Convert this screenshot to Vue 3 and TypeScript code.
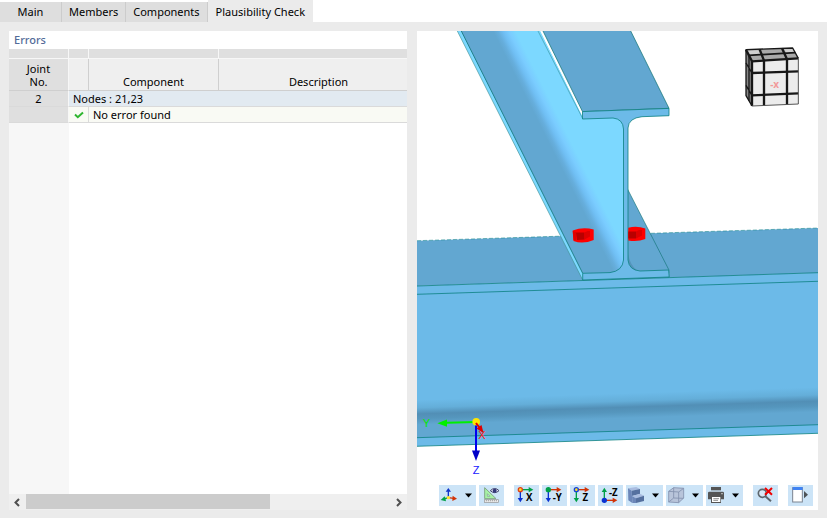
<script setup lang="ts">
import { ref } from 'vue'

interface Tab {
  id: string
  label: string
}

interface ResultRow {
  component: string
}

interface JointGroup {
  joint: number
  nodes: string
  rows: ResultRow[]
}

interface AxisTool {
  label: string
  text: string
  right: string
  vertical: string
  up: boolean
  dot: string
  ring: string
}

const tabs: Tab[] = [
  { id: 'main', label: 'Main' },
  { id: 'members', label: 'Members' },
  { id: 'components', label: 'Components' },
  { id: 'check', label: 'Plausibility Check' },
]
const activeTab = ref('check')

const groups: JointGroup[] = [
  { joint: 2, nodes: 'Nodes : 21,23', rows: [{ component: 'No error found' }] },
]

const green = '#00a048'
const red = '#d23205'
const blue = '#0a32d2'

const axisTools: AxisTool[] = [
  { label: 'View in X', text: 'X', right: green, vertical: blue, up: false, dot: '#ffe02e', ring: '#e23c14' },
  { label: 'View in -Y', text: '-Y', right: red, vertical: blue, up: false, dot: green, ring: green },
  { label: 'View in Z', text: 'Z', right: red, vertical: green, up: false, dot: '#ffe02e', ring: '#1440d8' },
  { label: 'View in -Z', text: '-Z', right: red, vertical: green, up: true, dot: blue, ring: blue },
]
</script>

<template>
  <div class="dialog">
    <nav class="tabs" role="tablist">
      <button
        v-for="tab in tabs"
        :key="tab.id"
        type="button"
        role="tab"
        class="tab"
        :class="{ active: tab.id === activeTab }"
        :aria-selected="tab.id === activeTab"
        @click="activeTab = tab.id"
      >{{ tab.label }}</button>
    </nav>

    <main class="content">
      <section class="panel errors">
        <h2 class="title">Errors</h2>
        <div class="grid-area">
          <table class="grid">
            <colgroup>
              <col class="c-joint" />
              <col class="c-state" />
              <col class="c-component" />
              <col class="c-description" />
            </colgroup>
            <thead>
              <tr class="strip">
                <td></td>
                <td></td>
                <td></td>
                <td></td>
              </tr>
              <tr class="head">
                <th class="row-head">Joint<br />No.</th>
                <th></th>
                <th>Component</th>
                <th>Description</th>
              </tr>
            </thead>
            <tbody v-for="group in groups" :key="group.joint">
              <tr class="group">
                <th class="row-head">{{ group.joint }}</th>
                <td colspan="3">{{ group.nodes }}</td>
              </tr>
              <tr v-for="row in group.rows" :key="row.component" class="result">
                <th class="row-head"></th>
                <td class="state">
                  <svg width="10" height="8" viewBox="0 0 10 8" aria-hidden="true">
                    <path d="M1 3.6 L3.8 6.2 L9 1.4" fill="none" stroke="#2fb52f" stroke-width="2" />
                  </svg>
                </td>
                <td colspan="2">{{ row.component }}</td>
              </tr>
            </tbody>
          </table>
        </div>
        <div class="scrollbar">
          <button type="button" class="arrow" aria-label="Scroll left">
            <svg width="8" height="9" viewBox="0 0 8 9"><path d="M5 1 L1.5 4.5 L5 8" fill="none" stroke="#505050" stroke-width="2" /></svg>
          </button>
          <div class="track"><div class="thumb"></div></div>
          <button type="button" class="arrow" aria-label="Scroll right">
            <svg width="8" height="9" viewBox="0 0 8 9"><path d="M2 1 L5.5 4.5 L2 8" fill="none" stroke="#505050" stroke-width="2" /></svg>
          </button>
        </div>
      </section>

      <section class="panel view">
        <svg class="scene" viewBox="417 31 401 479" preserveAspectRatio="xMidYMid slice" aria-hidden="true">
          <defs>
            <linearGradient id="fillet" gradientUnits="userSpaceOnUse" x1="417" y1="400" x2="418" y2="431">
              <stop offset="0" stop-color="#6cbae8" />
              <stop offset="0.25" stop-color="#64aed9" />
              <stop offset="0.45" stop-color="#528fb6" />
              <stop offset="0.6" stop-color="#5596bd" />
              <stop offset="0.8" stop-color="#62a7d1" />
            </linearGradient>
            <linearGradient id="bend" gradientUnits="userSpaceOnUse" x1="493" y1="31" x2="511" y2="22">
              <stop offset="0" stop-color="#62a7d1" />
              <stop offset="0.2" stop-color="#66aedc" />
              <stop offset="0.45" stop-color="#70bff4" />
              <stop offset="0.7" stop-color="#7accff" />
              <stop offset="1" stop-color="#7cd8ff" />
            </linearGradient>
          </defs>

          <!-- supporting beam -->
          <path d="M417 240.7 L818 228 V273 L417 286 Z" fill="#62a7d1" />
          <path d="M417 286 L818 272.7 V433.3 L417 446.3 Z" fill="#6cbae8" />
          <path d="M417 400 L818 387 V424.7 L417 437.7 Z" fill="url(#fillet)" />
          <g fill="none" stroke="#0b8080" stroke-width="0.8">
            <path d="M417 286 L818 272.7" />
            <path d="M417 294.3 L818 281.3" />
            <path d="M417 437.7 L818 424.7" />
            <path d="M417 446.3 L818 433.3" />
            <path d="M417 240.7 L818 228" stroke-dasharray="4 2" stroke-width="0.5" />
          </g>

          <!-- inclined beam, far flange half -->
          <path d="M627 188 L668.7 269.5 V273 H627 Z" fill="#62a7d1" stroke="#0b7070" stroke-width="0.6" />
          <path d="M628 252 Q629 264 637 270.5 L629 270 Z" fill="#4d87ab" opacity="0.6" />

          <!-- inclined beam, near flange and web -->
          <path d="M457.3 31 H540 L583 118 H624 V274 L582.7 280 Z" fill="#7cd8ff" />
          <path d="M461.3 31 H540 L583 118 H624 V268 L615 273 H582.7 Z" fill="url(#bend)" />
          <path d="M457.3 31 L582.7 280" fill="none" stroke="#3c8c8c" stroke-width="0.6" />
          <path d="M461.3 31 L582.7 273.3" fill="none" stroke="#0b7070" stroke-width="0.8" />
          <path d="M538 31 L582.7 118.7" fill="none" stroke="#3f9dac" stroke-width="0.7" />

          <!-- upper flange -->
          <path d="M542.5 30 H630.2 L669 108.3 L582.5 111.6 Z" fill="#62a7d1" stroke="#0b7070" stroke-width="0.7" />

          <!-- section face -->
          <path
            d="M582.5 111.6 L669 108.4 V115.7 L642 116.7 Q628.5 118 628 128 V260 Q629 270 640 271 L668.7 270 L669.2 277 L582.7 280 V273.3 L610 272.6 Q622.5 271 623.5 260 V129 Q623 119 613 118 L582.5 119 Z"
            fill="#6cbae8" stroke="#0b8080" stroke-width="0.8"
          />

          <!-- bolts -->
          <g>
            <path d="M572.7 230.5 Q583 226.5 593.7 229.5 V240 Q583 244.5 573.5 241 Z" fill="#ff0000" />
            <path d="M572.7 231 L576 232 V240.5 L573.5 240 Z" fill="#e20000" />
            <path d="M576 232.5 H584.5 V239.5 L577 240 Z" fill="#b80000" />
            <path d="M584.5 232.5 L587.5 231 H590 V236.5 L584.5 239.5 Z" fill="#df0000" />
            <path d="M628.3 227.7 Q637 225.5 645.3 228.5 V239 Q638 242 628.3 240.5 Z" fill="#ff0000" />
            <path d="M628.3 231.5 H636 V238.5 H628.3 Z" fill="#b80000" />
            <path d="M636 231.5 L639 230 H642 V235.5 L636 238.5 Z" fill="#df0000" />
          </g>

          <!-- coordinate axes -->
          <path d="M476 422 L447 422.8" stroke="#00f000" stroke-width="2" />
          <path d="M437.3 423.2 L447 419.4 V426.8 Z" fill="#00f000" />
          <path d="M476 423 V451" stroke="#0000f0" stroke-width="2" />
          <path d="M472 450.5 H480 L476 461 Z" fill="#0000c8" />
          <circle cx="476.2" cy="421.7" r="3.8" fill="#ffe600" />
          <path d="M476 423 L480.5 429" stroke="#e00000" stroke-width="2" />
          <path d="M476.5 428.5 L481.5 425 L483.5 433 Z" fill="#e00000" />
          <text class="axis" x="426.5" y="427" fill="#00e800">Y</text>
          <text class="axis" x="482" y="439" fill="#ff2020">X</text>
          <text class="axis" x="476" y="474" fill="#2020ff">Z</text>
        </svg>

        <button type="button" class="cube" aria-label="Navigation cube">
          <svg width="56" height="62" viewBox="0 0 168 186">
            <path d="M6 11 L146 6 L163 37 L24 46 Z" fill="#a9a9a9" />
            <path d="M12 15 L43 13 L50 25 L19 28 Z M121 10 L146 9 L153 18 L127 21 Z" fill="#cfcfcf" />
            <path d="M6 11 L24 46 V180 L6 149 Z" fill="#878787" />
            <path d="M24 46 L163 37 V174 L24 180 Z" fill="#ececec" />
            <g fill="none" stroke="#171717" stroke-width="7" stroke-linejoin="round">
              <path d="M47 10 L60 44 V179" />
              <path d="M114 7 L129 40 V176" />
              <path d="M14 28 L154 20" stroke-width="5" />
              <path d="M24 81 L163 76 M24 148 L163 142" />
              <path d="M24 81 L6 51 M24 148 L6 118 M15 29 V164" stroke-width="4" />
              <path d="M24 46 V180" />
              <path d="M6 11 L24 46 L163 37" stroke-width="7" />
              <path d="M24 180 L6 149 V11 L146 6 L163 37" stroke-width="4" />
              <path d="M163 37 V174 L24 180" stroke-width="3" stroke="#555" />
            </g>
            <text x="92" y="125" class="cube-face">-x</text>
          </svg>
        </button>

        <div class="toolbar" role="toolbar">
          <div class="tool-group">
            <button type="button" class="tool" aria-label="Axes">
              <svg width="25" height="21" viewBox="0 0 75 63">
                <path d="M28 38 V17" stroke="#1034c8" stroke-width="4" />
                <path d="M20 20 L28 9 L36 20 Z" fill="#1034c8" />
                <path d="M28 38 L44 40" stroke="#d23205" stroke-width="4" />
                <path d="M41 32 L54 41 L40 48 Z" fill="#d23205" />
                <path d="M28 38 L15 42" stroke="#00a048" stroke-width="4" />
                <path d="M17 34 L5 45 L21 49 Z" fill="#00a048" />
                <circle cx="28" cy="38" r="5" fill="#ffe22c" />
              </svg>
              <svg class="caret" width="12" height="21" viewBox="0 0 12 21"><path d="M1 8.5 H8 L4.5 12.5 Z" /></svg>
            </button>
            <button type="button" class="tool" aria-label="Display options">
              <svg width="25" height="21" viewBox="0 0 75 63">
                <path d="M17 8 V41 H51 Z" fill="#a7f2a5" stroke="#83a688" stroke-width="3" />
                <path d="M25 26 V34 H33 Z" fill="#cce4f7" stroke="#83a688" stroke-width="2" />
                <rect x="16" y="44" width="42" height="8" fill="#eee" stroke="#929292" stroke-width="2" />
                <path d="M22 45 V49 M28 45 V49 M34 45 V49 M40 45 V49 M46 45 V49 M52 45 V49" stroke="#777" stroke-width="2" />
                <path d="M34 17 Q47 4 60 17 Q47 29 34 17 Z" fill="#e9ecfa" stroke="#41436d" stroke-width="3" />
                <circle cx="47" cy="17" r="6" fill="#343779" />
              </svg>
            </button>
          </div>

          <div class="tool-group">
            <button v-for="tool in axisTools" :key="tool.text" type="button" class="tool" :aria-label="tool.label">
              <svg width="25" height="21" viewBox="0 0 75 63">
                <g v-if="tool.up">
                  <path d="M19 46 V18" :stroke="tool.vertical" stroke-width="4" />
                  <path d="M11 21 L19 8 L27 21 Z" :fill="tool.vertical" />
                  <path d="M19 46 H48" :stroke="tool.right" stroke-width="4" />
                  <path d="M44 38 L58 46 L44 54 Z" :fill="tool.right" />
                  <circle cx="19" cy="46" r="6" :fill="tool.dot" :stroke="tool.ring" stroke-width="4" />
                </g>
                <g v-else>
                  <path d="M19 14 V42" :stroke="tool.vertical" stroke-width="4" />
                  <path d="M11 39 L19 52 L27 39 Z" :fill="tool.vertical" />
                  <path d="M19 14 H48" :stroke="tool.right" stroke-width="4" />
                  <path d="M44 6 L58 14 L44 22 Z" :fill="tool.right" />
                  <circle cx="19" cy="14" r="6" :fill="tool.dot" :stroke="tool.ring" stroke-width="4" />
                </g>
                <text class="axis-name" x="46" :y="tool.up ? 33 : 49">{{ tool.text }}</text>
              </svg>
            </button>
            <button type="button" class="tool" aria-label="Rendering">
              <svg width="25" height="21" viewBox="0 0 75 63">
                <path d="M6 10 L31 6 L42 12 L17 17 Z" fill="#a9bce0" />
                <path d="M6 10 L17 17 L19 54 L7 46 Z" fill="#6c86b8" />
                <path d="M17 17 L42 12 V27 L18 33 Z" fill="#55709f" />
                <path d="M18 33 L42 26 L54 32 L30 40 Z" fill="#a9bce0" />
                <path d="M18 33 L30 40 V54 H19 Z" fill="#6c86b8" />
                <path d="M30 40 L54 32 V48 L30 54 Z" fill="#55709f" />
              </svg>
              <svg class="caret" width="12" height="21" viewBox="0 0 12 21"><path d="M1 8.5 H8 L4.5 12.5 Z" /></svg>
            </button>
            <button type="button" class="tool" aria-label="Box view">
              <svg width="25" height="21" viewBox="0 0 75 63">
                <path d="M8 19 L23 8 H53 V39 L38 53 L8 51 Z" fill="#b8c4da" />
                <path d="M8 19 L38 21 V53 L8 51 Z M8 19 L23 8 L53 10 L38 21 M53 10 V39 L38 53 M23 8 V39 L8 51 M23 39 L53 40" fill="none" stroke="#8290ad" stroke-width="2.5" />
              </svg>
              <svg class="caret" width="12" height="21" viewBox="0 0 12 21"><path d="M1 8.5 H8 L4.5 12.5 Z" /></svg>
            </button>
            <button type="button" class="tool" aria-label="Print">
              <svg width="25" height="21" viewBox="0 0 75 63">
                <path d="M15 6 H45 V16 H15 Z" fill="#555" />
                <path d="M6 24 Q6 20 10 20 H50 Q54 20 54 24 V43 H6 Z" fill="#555" />
                <rect x="15" y="34" width="30" height="20" fill="#555" />
                <rect x="18" y="36" width="25" height="15" fill="#fff" />
                <path d="M22 41 H39 M22 46 H36" stroke="#555" stroke-width="2" />
                <circle cx="48" cy="26" r="2" fill="#fff" />
              </svg>
              <svg class="caret" width="12" height="21" viewBox="0 0 12 21"><path d="M1 8.5 H8 L4.5 12.5 Z" /></svg>
            </button>
          </div>

          <div class="tool-group spaced">
            <button type="button" class="tool" aria-label="Cancel zoom">
              <svg width="25" height="21" viewBox="0 0 75 63">
                <circle cx="28" cy="25" r="12" fill="#d9e9f7" stroke="#5d666d" stroke-width="5" />
                <path d="M37 34 L54 49" stroke="#5d666d" stroke-width="6" />
                <path d="M36 9 L57 29 M57 9 L36 29" stroke="#ef0000" stroke-width="6" />
              </svg>
            </button>
            <button type="button" class="tool" aria-label="Toggle panel">
              <svg width="25" height="21" viewBox="0 0 75 63">
                <rect x="14" y="8" width="29" height="43" fill="#fff" stroke="#7b8491" stroke-width="3" />
                <rect x="14" y="6" width="30" height="9" fill="#3f82f3" />
                <path d="M48 18 L60 29 L48 40 Z" fill="#4e5357" />
              </svg>
            </button>
          </div>
        </div>
      </section>
    </main>
  </div>
</template>

<style>
body {
  margin: 0;
}
</style>

<style scoped>
.dialog {
  display: flex;
  flex-direction: column;
  min-height: 100vh;
  background: #ebebeb;
  color: #000;
  font-family: "Noto Sans", "Open Sans", sans-serif;
  font-size: 11px;
}

.dialog button {
  margin: 0;
  border: 0;
  padding: 0;
  font: inherit;
  color: inherit;
}

.tabs {
  display: flex;
  align-items: flex-end;
  height: 22px;
  background: #fff;
}

.dialog .tab {
  min-width: 62px;
  height: 20px;
  padding: 0 7px;
  border-right: 1px solid #ccc;
  background: #dedede;
  line-height: 20px;
  white-space: nowrap;
}

.dialog .tab.active {
  height: 22px;
  padding: 2px 8px 0;
  border-right: 0;
  background: #ebebeb;
}

.content {
  flex: 1;
  display: grid;
  grid-template-columns: minmax(0, 398fr) minmax(0, 401fr);
  gap: 10px;
  padding: 9px 9px 8px;
}

.panel {
  background: #fff;
}

.errors {
  display: flex;
  flex-direction: column;
}

.title {
  margin: 0;
  padding-left: 5px;
  color: #536b99;
  font-size: 11px;
  font-weight: 500;
  line-height: 18px;
}

.grid-area {
  flex: 1;
  overflow: hidden;
  background: linear-gradient(to right, #f7f7f7 60px, #fff 60px);
}

.grid {
  width: calc(100% + 12px);
  border-collapse: separate;
  border-spacing: 0;
  table-layout: fixed;
}

.c-joint {
  width: 60px;
}

.c-state {
  width: 20px;
}

.c-component {
  width: 130px;
}

.grid th,
.grid td {
  box-sizing: border-box;
  padding: 0;
  font-weight: 400;
}

.strip td {
  height: 10px;
  border-right: 1px solid #f7f7f7;
  border-bottom: 1px solid #f7f7f7;
  background: #dfdfdf;
}

.grid .head th {
  height: 32px;
  padding-bottom: 2px;
  border-right: 1px solid #cfcfcf;
  border-bottom: 1px solid #cfcfcf;
  background: #efefef;
  line-height: 13px;
  vertical-align: bottom;
}

.grid tr .row-head,
.grid .head .row-head {
  border-right: 1px solid #f7f7f7;
  background: #dfdfdf;
}

.group td,
.group th {
  height: 16px;
  border-bottom: 1px solid #dadada;
  line-height: 15px;
}

.grid .group td {
  padding-left: 4px;
  background: #e2eaf1;
}

.result td,
.result th {
  height: 16px;
  border-bottom: 1px solid #dadada;
  background: #f9faf4;
  line-height: 15px;
}

.grid .result td {
  padding-left: 4px;
}

.grid .result .state {
  padding: 0;
  border-right: 1px solid #dadada;
}

.state svg {
  display: block;
  margin: 0 auto;
}

.scrollbar {
  display: flex;
  height: 16px;
  background: #efefef;
}

.dialog .arrow {
  display: grid;
  place-items: center;
  width: 17px;
  background: transparent;
}

.track {
  flex: 1;
}

.thumb {
  width: 67%;
  height: 15px;
  background: #ccc;
}

.view {
  position: relative;
  overflow: hidden;
}

.scene {
  position: absolute;
  inset: 0;
  width: 100%;
  height: 100%;
}

.axis {
  font-family: "Liberation Sans", sans-serif;
  font-size: 11px;
  text-anchor: middle;
}

.dialog .cube {
  position: absolute;
  top: 15px;
  right: 18px;
  background: transparent;
}

.cube svg {
  display: block;
}

.cube-face {
  fill: #f29a9a;
  font-size: 30px;
  font-weight: 700;
  text-anchor: middle;
}

.toolbar {
  position: absolute;
  right: 5px;
  bottom: 4px;
  display: flex;
  gap: 10px;
}

.tool-group {
  display: flex;
  gap: 3px;
}

.spaced {
  gap: 10px;
}

.dialog .tool {
  display: flex;
  height: 21px;
  background: #cce4f7;
}

.caret {
  fill: #000;
}

.axis-name {
  font-family: "Open Sans", "Noto Sans", sans-serif;
  font-size: 29px;
  font-weight: 700;
  text-anchor: middle;
}
</style>
